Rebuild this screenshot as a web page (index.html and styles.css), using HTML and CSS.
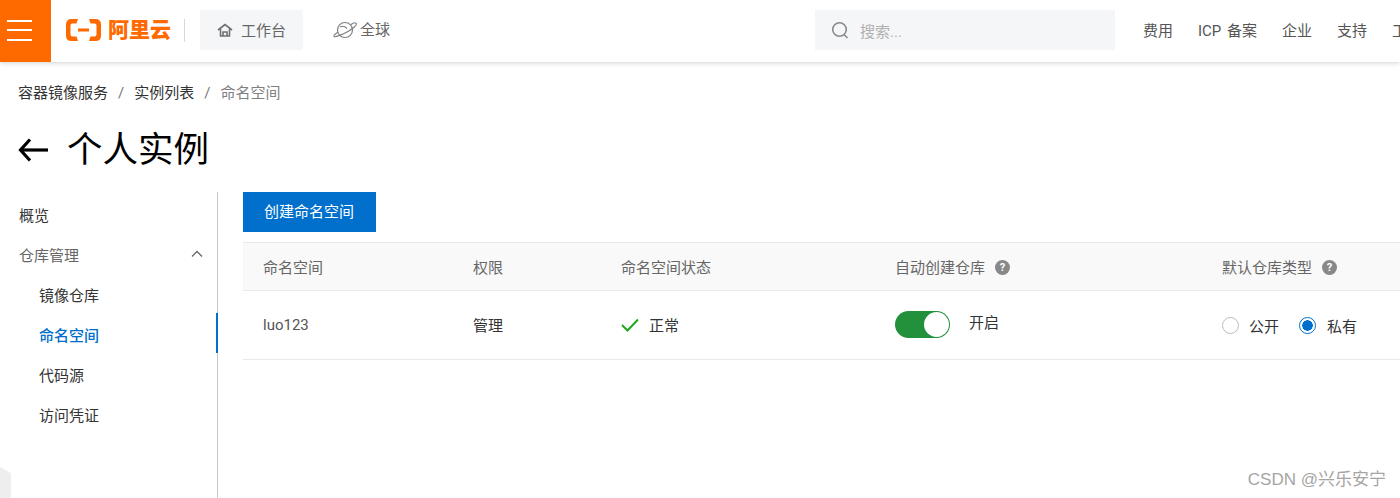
FILE: index.html
```html
<!DOCTYPE html>
<html lang="zh-CN">
<head>
<meta charset="utf-8">
<title>命名空间</title>
<link rel="stylesheet" href="styles.css">
</head>
<body>
<header class="topbar">
  <div class="menu-btn"><span></span><span></span><span></span></div>
  <div class="logo">
    <svg class="logo-mark" width="37" height="24" viewBox="0 0 37 24"><path d="M13 1H6.500Q1 1 1 6.500V17.500Q1 23 6.500 23H13L11.500 18.500H7.500Q5.500 18.500 5.500 16.500V7.500Q5.500 5.500 7.500 5.500H11.500ZM24 1H30.500Q36 1 36 6.500V17.500Q36 23 30.500 23H24L25.500 18.500H29.500Q31.500 18.500 31.500 16.500V7.500Q31.500 5.500 29.500 5.500H25.500Z" fill="#ff6a00"/><rect x="13" y="10.500" width="11" height="3" fill="#ff6a00"/></svg>
    <span class="logo-text">阿里云</span>
  </div>
  <div class="divider"></div>
  <a class="workbench">
    <svg width="16" height="14" viewBox="0 0 16 14" fill="none" stroke="#707070" stroke-width="1.600"><path d="M1 7L8 1.500L15 7"/><path d="M3.500 6V13H12.500V6"/><path d="M6 13V9H10V13"/></svg>
    <span>工作台</span>
  </a>
  <a class="region">
    <svg width="24" height="18" viewBox="0 0 24 18" fill="none" stroke="#808080" stroke-width="1.200"><circle cx="12" cy="9" r="7.500"/><path d="M5 11C2 13 0.500 14.500 1 15.500C2 16.500 9 14 15 10.500C20 7.500 24 4 23.300 2.500C22.500 1.500 20 2 18 3.500"/><path d="M7 6C9.500 4.500 12 5.500 14 7.500"/></svg>
    <span>全球</span>
  </a>
  <div class="search">
    <svg width="20" height="20" viewBox="0 0 20 20" fill="none" stroke="#8a8a8a" stroke-width="1.600"><circle cx="9.500" cy="9.500" r="6.800"/><path d="M14 14.500L17.500 18"/></svg>
    <span>搜索...</span>
  </div>
  <nav class="toplinks">
    <a>费用</a><a>ICP 备案</a><a>企业</a><a>支持</a><a>工单</a>
  </nav>
</header>

<div class="crumbs">
  <a>容器镜像服务</a><i>/</i><a>实例列表</a><i>/</i><b>命名空间</b>
</div>

<div class="title">
  <svg width="30" height="24" viewBox="0 0 30 24" fill="none" stroke="#000" stroke-width="3.200"><path d="M30 12H3"/><path d="M12 1.500L2.500 12L12 22.500"/></svg>
  <h1>个人实例</h1>
</div>

<div class="content">
  <aside class="sidebar">
    <a class="item dark">概览</a>
    <a class="item group">仓库管理
      <svg width="12" height="8" viewBox="0 0 12 8" fill="none" stroke="#666" stroke-width="1.300"><path d="M1 6.500L6 1.500L11 6.500"/></svg>
    </a>
    <a class="item sub dark">镜像仓库</a>
    <a class="item sub active">命名空间</a>
    <a class="item sub dark">代码源</a>
    <a class="item sub dark">访问凭证</a>
  </aside>
  <main class="main">
    <button class="primary"><span>创建命名空间</span></button>
    <div class="table">
      <div class="row head">
        <div>命名空间</div>
        <div>权限</div>
        <div>命名空间状态</div>
        <div>自动创建仓库<span class="help">?</span></div>
        <div>默认仓库类型<span class="help">?</span></div>
      </div>
      <div class="row body">
        <div class="name">luo123</div>
        <div class="cell">管理</div>
        <div class="status">
          <svg width="18" height="14" viewBox="0 0 18 14" fill="none" stroke="#1fa81f" stroke-width="2"><path d="M1 7L6.500 12.500L17 1.500"/></svg>
          <span>正常</span>
        </div>
        <div class="auto"><span class="switch"><span class="knob"></span></span><span class="switch-label">开启</span></div>
        <div class="radios">
          <span class="radio"></span><span class="radio-label">公开</span>
          <span class="radio on"></span><span>私有</span>
        </div>
      </div>
    </div>
  </main>
</div>

<div class="corner"></div>
<div class="watermark">CSDN @兴乐安宁</div>
</body>
</html>
```
FILE: styles.css
```css
* { box-sizing: border-box; }
html, body { margin: 0; height: 498px; overflow: hidden; background: #fff; }
body { position: relative; font-family: Roboto, "Noto Sans CJK SC", "Noto Sans", sans-serif; font-size: 15px; color: #333; }

.topbar { height: 62px; padding-bottom: 2px; display: flex; align-items: center; background: #fff; box-shadow: 0 1px 5px rgba(0,0,0,.18); white-space: nowrap; position: relative; }
.menu-btn { width: 51px; height: 62px; align-self: flex-start; background: #ff6a00; flex: none; display: flex; flex-direction: column; justify-content: center; gap: 7.500px; padding: 0 19px 2px 7px; }
.menu-btn span { display: block; height: 2px; background: #fff; }
.logo { display: flex; align-items: center; gap: 6px; margin-left: 14px; width: 105px; flex: none; }
.logo-mark { flex: none; }
.logo-text { font-size: 21px; font-weight: 900; color: #ff6a00; line-height: 24px; }
.divider { width: 1px; height: 23px; background: #d8d8d8; margin-left: 14px; flex: none; }
.workbench { width: 103px; height: 40px; margin-left: 15px; background: #f5f6f7; border-radius: 2px; display: flex; align-items: center; gap: 8px; padding-left: 17px; color: #666; flex: none; }
.workbench span { margin-bottom: 2px; }
.region { display: flex; align-items: center; gap: 3px; margin-left: 29px; padding-left: 1px; color: #666; width: 483px; flex: none; }
.region span { margin-bottom: 4px; }
.search { width: 300px; height: 40px; background: #f5f6f7; display: flex; align-items: center; gap: 10px; padding-left: 15px; color: #b0b0b0; flex: none; }
.toplinks { display: flex; gap: 25px; margin-left: 28px; margin-bottom: 2px; color: #555; flex: none; word-spacing: 2px; }

.crumbs { margin-top: 21px; padding-left: 18px; height: 21px; line-height: 21px; display: flex; color: #333; }
.crumbs i { font-style: normal; color: #777; padding: 0 10px; }
.crumbs b { font-weight: 400; color: #808080; }

.title { display: flex; align-items: center; padding-left: 18px; gap: 19px; margin-top: 22px; height: 48px; }
.title svg { flex: none; }
.title h1 { margin: 0; font-size: 35.500px; font-weight: 400; line-height: 48px; color: #000; }

.content { display: flex; margin-top: 18px; height: 306px; }
.sidebar { width: 218px; flex: none; border-right: 1px solid #c8c8c8; padding-top: 2px; }
.item { display: flex; align-items: center; justify-content: space-between; height: 40px; padding: 0 14px 0 19px; color: #666; position: relative; }
.item.dark { color: #333; }
.item.sub { padding-left: 39px; }
.item.active { color: #006fcc; font-weight: 500; }
.item.active::after { content: ""; position: absolute; right: -1px; top: -1px; bottom: 1px; width: 2px; background: #0070cc; }
.group svg { flex: none; }

.main { margin-left: 25px; flex: none; width: 1400px; }
.primary { display: block; width: 133px; height: 40px; border: 0; background: #0070cc; color: #fff; font: inherit; padding: 0 1px 3px 0; }

.table { margin-top: 10px; }
.row { display: grid; grid-template-columns: 230px 148px 274px 327px 1fr; border-bottom: 1px solid #e9e9e9; align-items: center; }
.row > div:first-child { padding-left: 20px; }
.head { height: 49px; background: #f9f9f9; border-top: 1px solid #e9e9e9; color: #666; padding-bottom: 1px; }
.body { height: 69px; }
.name { color: #555; margin-top: -1px; }
.cell { margin-top: -1px; }
.help { display: inline-flex; width: 15px; height: 15px; border-radius: 50%; background: #888; color: #fff; font-size: 11px; font-weight: 700; align-items: center; justify-content: center; margin-left: 10px; line-height: 15px; vertical-align: 2px; }
.status { display: flex; align-items: center; gap: 10px; margin-top: -1px; }
.auto { display: flex; align-items: center; gap: 19px; margin-top: -2px; }
.switch { width: 55px; height: 27px; background: #23903c; border-radius: 14px; display: flex; justify-content: flex-end; align-items: center; padding-right: 1px; flex: none; }
.knob { width: 25px; height: 25px; border-radius: 50%; background: #fff; }
.switch-label { margin-bottom: 5px; }
.radios { display: flex; align-items: center; margin-top: 1px; }
.radio { width: 17px; height: 17px; border: 1px solid #bbb; border-radius: 50%; background: #fff; margin-right: 10px; flex: none; }
.radio.on { border-color: #0070cc; margin-right: 11px; background: radial-gradient(circle, #0070cc 0 5px, #fff 5.500px); }
.radio-label { margin-right: 20px; }

.corner { position: absolute; left: 0; bottom: 0; width: 11px; height: 31px; background: #eeeeee; clip-path: polygon(0 0, 100% 20%, 100% 100%, 0 100%); }
.watermark { position: absolute; right: 14px; top: 468px; font-family: "Liberation Sans", "Noto Sans CJK SC", sans-serif; font-size: 17px; line-height: 24px; color: #a5a5a5; }
```
